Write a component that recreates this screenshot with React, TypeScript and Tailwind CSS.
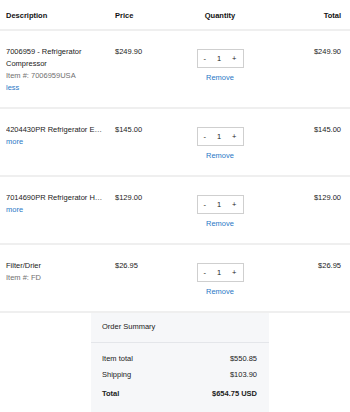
import React from "react";

type Item = {
  name: string;
  sku?: string;
  link?: string;
  truncate?: boolean;
  price: string;
};

const items: Item[] = [
  { name: "7006959 - Refrigerator Compressor", sku: "Item #: 7006959USA", link: "less", price: "$249.90" },
  { name: "4204430PR Refrigerator Evaporator Fan Motor", link: "more", truncate: true, price: "$145.00" },
  { name: "7014690PR Refrigerator Heater Assembly", link: "more", truncate: true, price: "$129.00" },
  { name: "Filter/Drier", sku: "Item #: FD", price: "$26.95" },
];

function Row({ item }: { item: Item }) {
  return (
    <div className="flex pl-[6px] pr-[9px] pt-[15px] pb-[13px] border-b-2 border-[#efefef]">
      <div className="w-[109px] pr-[11px]">
        <div className={item.truncate ? "truncate text-[#222]" : "text-[#222]"}>{item.name}</div>
        {item.sku && <div className="text-[#707070]">{item.sku}</div>}
        {item.link && <div className="text-[#2a78c6]">{item.link}</div>}
      </div>
      <div className="w-[65px] text-[#222]">{item.price}</div>
      <div className="w-[80px] flex flex-col items-center">
        <div className="mt-[3px] w-[47px] h-[19px] border border-[#cfcfcf] flex items-center justify-between px-[6px] text-[#222]">
          <span>-</span>
          <span>1</span>
          <span>+</span>
        </div>
        <div className="mt-[4px] text-[#2a78c6]">Remove</div>
      </div>
      <div className="flex-1 text-right text-[#222]">{item.price}</div>
    </div>
  );
}

export default function App() {
  return (
    <div
      className="w-[350px] h-[412px] overflow-hidden bg-white text-[7.5px] leading-[12px]"
      style={{ fontFamily: '"Liberation Sans", Arial, sans-serif' }}
    >
      <div className="flex pl-[6px] pr-[9px] pt-[10px] pb-[7px] border-b-2 border-[#efefef] font-bold text-[#111]">
        <div className="w-[109px]">Description</div>
        <div className="w-[65px]">Price</div>
        <div className="w-[80px] text-center">Quantity</div>
        <div className="flex-1 text-right">Total</div>
      </div>
      {items.map((it, i) => (
        <Row key={i} item={it} />
      ))}
      <div className="ml-[91px] w-[178px] bg-[#f6f7f9] text-[#222]">
        <div className="pl-[11px] pr-[12px] pt-[8px] pb-[9px] border-b border-[#e4e6ea]">Order Summary</div>
        <div className="pl-[11px] pr-[12px] pt-[8px] pb-[12px]">
          <div className="flex justify-between leading-[16px]">
            <span>Item total</span>
            <span>$550.85</span>
          </div>
          <div className="flex justify-between leading-[16px]">
            <span>Shipping</span>
            <span>$103.90</span>
          </div>
          <div className="flex justify-between font-bold mt-[3px] leading-[16px]">
            <span>Total</span>
            <span>$654.75 USD</span>
          </div>
        </div>
      </div>
    </div>
  );
}
